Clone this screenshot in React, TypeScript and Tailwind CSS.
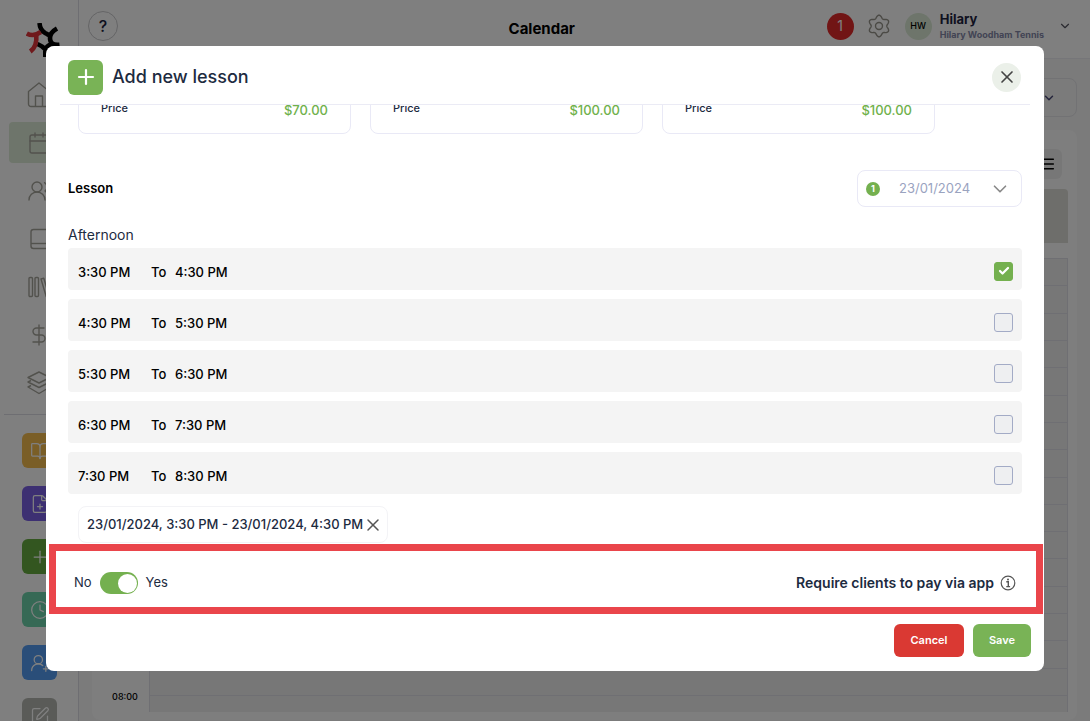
import React, { useState } from 'react';
import type { LucideIcon } from 'lucide-react';
import {
  BookOpen,
  Calendar,
  Check,
  ChevronDown,
  Clock,
  DollarSign,
  FilePlus,
  Menu,
  Plus,
  SquarePen,
  UserRoundPlus,
  UsersRound,
  X,
} from 'lucide-react';

interface Slot {
  from: string;
  to: string;
}

const slots: Slot[] = [
  { from: '3:30 PM', to: '4:30 PM' },
  { from: '4:30 PM', to: '5:30 PM' },
  { from: '5:30 PM', to: '6:30 PM' },
  { from: '6:30 PM', to: '7:30 PM' },
  { from: '7:30 PM', to: '8:30 PM' },
];

const prices = ['$70.00', '$100.00', '$100.00'];

const shortcuts: { label: string; icon: LucideIcon; color: string }[] = [
  { label: 'Courses', icon: BookOpen, color: 'bg-[#f5bc4f]' },
  { label: 'New invoice', icon: FilePlus, color: 'bg-[#7a61e4]' },
  { label: 'New lesson', icon: Plus, color: 'bg-[#66ac40]' },
  { label: 'Availability', icon: Clock, color: 'bg-[#6cd3ab]' },
  { label: 'Add client', icon: UserRoundPlus, color: 'bg-[#559df2]' },
  { label: 'Notes', icon: SquarePen, color: 'bg-[#b4b7b0]' },
];

const HomeIcon: React.FC = () => (
  <svg viewBox="0 0 24 26" className="h-[26px] w-6" fill="none" stroke="currentColor" strokeWidth="1.4">
    <path d="M1.500 9.500 12 1l10.500 8.500V22a2.500 2.500 0 0 1-2.500 2.500H4A2.500 2.500 0 0 1 1.500 22zM8.500 24.500V14h7v10.500" strokeLinejoin="round" />
  </svg>
);

const BookIcon: React.FC = () => (
  <svg viewBox="0 0 24 24" className="h-6 w-6" fill="none" stroke="currentColor" strokeWidth="1.4">
    <rect x="4" y="2.500" width="18" height="19" rx="2.500" />
    <path d="M4 16.500h18" />
  </svg>
);

const LibraryIcon: React.FC = () => (
  <svg viewBox="0 0 24 24" className="h-6 w-6" fill="none" stroke="currentColor" strokeWidth="1.4">
    <rect x="2" y="2.500" width="3.500" height="19" rx="1" />
    <rect x="8" y="2.500" width="3.500" height="19" rx="1" />
    <path d="M14 4l2.800-.8 5.200 17.500-2.800.8z" strokeLinejoin="round" />
  </svg>
);

const LayersIcon: React.FC = () => (
  <svg viewBox="0 0 24 24" className="h-6 w-6" fill="none" stroke="currentColor" strokeWidth="1.4" strokeLinejoin="round">
    <path d="M12 1l11 5.500L12 12 1 6.500zM4 9.500 1 11l11 5.500L23 11l-3-1.500M4 14.500 1 16l11 6.500L23 16l-3-1.500" />
  </svg>
);

// six-lobed outline, sampled every three degrees
const gearPath = Array.from({ length: 120 }, (_, i) => {
  const a = (i * Math.PI) / 60;
  const r = 9.3 + 1.5 * Math.cos(6 * a);
  return `${i ? 'L' : 'M'}${(12 + r * Math.sin(a)).toFixed(2)} ${(12 - r * Math.cos(a)).toFixed(2)}`;
}).join('');

const GearIcon: React.FC = () => (
  <svg viewBox="0 0 24 24" className="h-6 w-6" fill="none" stroke="currentColor" strokeWidth="1.4">
    <path d={`${gearPath}Z`} />
    <circle cx="12" cy="12" r="3.500" />
  </svg>
);

const InfoIcon: React.FC = () => (
  <svg viewBox="0 0 16 16" className="h-4 w-4" fill="none" stroke="#555" strokeWidth="1.200">
    <circle cx="8" cy="8" r="6.800" />
    <path d="M6.300 6.800H8.300V11.500M6.300 11.600h3.800" strokeWidth="1.400" />
    <circle cx="8" cy="4.500" r="1" fill="#555" stroke="none" />
  </svg>
);

const Logo: React.FC = () => (
  <svg viewBox="0 0 34 34" className="h-[34px] w-[34px]" fill="none" strokeWidth="4.6">
    <path d="M13.500 0c.3 5 2.500 8.300 6 10.300 2 1 4 1.700 5.500 3" stroke="#000" />
    <path d="M31 5.500c-4.500 2.500-7 5.500-7 9.500s2 7.500 9.500 6.700" stroke="#000" />
    <path d="M27 20.500c-4.500 1.300-7.700 4-7.700 8V34M19.500 26.500c-2-2.500-4.500-4-8-5.500" stroke="#000" />
    <path d="M.8 10.500c4.500 2.500 9 2 14-1.500" stroke="#e0343a" />
    <path d="M4.300 28.500c5-3.500 6.700-8.500 6-17" stroke="#e0343a" />
  </svg>
);

const navItems: { label: string; icon: React.ElementType }[] = [
  { label: 'Home', icon: HomeIcon },
  { label: 'Calendar', icon: Calendar },
  { label: 'Clients', icon: UsersRound },
  { label: 'Bookings', icon: BookIcon },
  { label: 'Library', icon: LibraryIcon },
  { label: 'Payments', icon: DollarSign },
  { label: 'Packages', icon: LayersIcon },
];

const Sidebar: React.FC = () => (
  <aside className="flex w-[79px] shrink-0 flex-col border-r border-[#dcdce4] bg-white">
    <div className="h-[74px] shrink-0 pt-[23px] pl-[26px]">
      <Logo />
    </div>
    <nav className="flex flex-col gap-[7px] px-[9px] pb-[11px]">
      {navItems.map(({ label, icon: Icon }) => (
        <a
          key={label}
          href="#"
          aria-label={label}
          className={`flex h-[41px] items-center justify-center rounded text-[#a5a49b] ${
            label === 'Calendar' ? 'bg-[#dcebd6]' : ''
          }`}
        >
          <Icon className="h-6 w-6" strokeWidth={1.4} />
        </a>
      ))}
    </nav>
    <div className="mx-1 border-t border-[#dcdce4]" />
    <div className="flex flex-col gap-[18px] pt-[18px] pl-[22px]">
      {shortcuts.map(({ label, icon: Icon, color }) => (
        <button
          key={label}
          aria-label={label}
          className={`flex h-[35px] w-[35px] shrink-0 items-center justify-center rounded-md text-white ${color}`}
        >
          <Icon className="h-5 w-5" strokeWidth={1.5} />
        </button>
      ))}
    </div>
  </aside>
);

const TopBar: React.FC = () => (
  <header className="grid h-[59px] shrink-0 grid-cols-[11fr_auto_13fr] items-center border-b border-[#ececf2] bg-white pr-[18px] pb-1.5 pl-[9px]">
    <button className="h-[30px] w-[30px] rounded-full border border-[#c9c9cc] text-base font-medium text-[#1d2340]">
      ?
    </button>
    <h1 className="pt-1.5 text-[15px] font-bold text-black">Calendar</h1>
    <div className="flex items-center justify-end">
      <span className="flex h-[27px] w-[27px] items-center justify-center rounded-full bg-[#e32b2b] text-sm text-white">
        1
      </span>
      <span className="ml-[13px] text-[#96948b]">
        <GearIcon />
      </span>
      <span className="ml-3.5 flex h-[27px] w-[27px] items-center justify-center rounded-full bg-[#dcebd6] text-[9px] font-medium">
        HW
      </span>
      <div className="mr-3.5 ml-2 pt-0.5 whitespace-nowrap">
        <p className="text-[13px] leading-4 font-bold text-[#1d2340]">Hilary</p>
        <p className="text-[9px] leading-4 font-bold text-[#8488a8]">Hilary Woodham Tennis</p>
      </div>
      <ChevronDown className="h-3.5 w-3.5 text-[#555560]" strokeWidth={2} />
    </div>
  </header>
);

const CalendarPage: React.FC = () => (
  <div className="flex min-w-0 flex-1 flex-col">
    <TopBar />
    <main className="flex min-h-0 flex-1 flex-col bg-[#f6f6f6] px-[13px] pt-[19px]">
      <button
        aria-label="Choose coach"
        className="flex h-[39px] w-44 items-center justify-end self-end rounded-lg border border-[#e4e4e8] pr-5 text-[#4a4a78]"
      >
        <ChevronDown className="h-3.5 w-3.5" strokeWidth={2.5} />
      </button>
      <section className="mt-[13px] flex flex-col rounded-lg bg-[#fcfcfc] px-[9px] pt-[19px] pb-2">
        <button
          aria-label="View options"
          className="mr-1.5 flex h-[30px] w-10 items-center justify-end self-end rounded-md bg-[#efefef] pr-1.5"
        >
          <Menu className="h-4 w-4" strokeWidth={2.2} />
        </button>
        <div className="mt-2.5 h-[54px] rounded-t bg-[#dddcd7]" />
        <div className="mt-[15px] grid h-[454px] grid-cols-[48px_1fr] overflow-hidden">
          <div className="flex flex-col items-center justify-end pb-2 text-[9px] leading-3.5 font-medium text-black">
            08:00
          </div>
          <div className="flex min-h-0 flex-col border-x border-t border-[#dfdfe6] bg-[#efefef]">
            {Array.from({ length: 16 }, (_, i) => (
              <div key={i} className="flex-1 border-b border-[#dfdfe6]" />
            ))}
            <div className="h-4" />
          </div>
        </div>
      </section>
    </main>
  </div>
);

const PriceCard: React.FC<{ price: string }> = ({ price }) => (
  <div className="flex h-[60px] w-[273px] items-center justify-between rounded-lg border border-[#e9e9f6] px-[22px] pt-2">
    <span className="text-[11px] font-medium text-[#1d2b3f]">Price</span>
    <span className="pt-1.5 text-[13px] font-medium text-[#6fb14b]">{price}</span>
  </div>
);

interface SlotRowProps extends Slot {
  checked: boolean;
  onToggle: () => void;
}

const SlotRow: React.FC<SlotRowProps> = ({ from, to, checked, onToggle }) => (
  <label className="flex h-[42px] items-center rounded bg-[#f4f4f4] pr-[9px] pl-2.5 text-[13px] font-medium text-black">
    <span className="w-[73px] pt-2">{from}</span>
    <span className="w-6 pt-2">To</span>
    <span className="flex-1 pt-2">{to}</span>
    <span className="grid place-items-center pt-1">
      <input
        type="checkbox"
        checked={checked}
        onChange={onToggle}
        className="col-start-1 row-start-1 h-[19px] w-[19px] appearance-none rounded-[3px] border border-[#a3abc6] bg-[#eeeff1] checked:border-[#74b04f] checked:bg-[#74b04f]"
      />
      {checked && (
        <Check className="pointer-events-none col-start-1 row-start-1 h-3 w-3 text-white" strokeWidth={4.5} />
      )}
    </span>
  </label>
);

const LessonDialog: React.FC = () => {
  const [selected, setSelected] = useState<string[]>(['3:30 PM']);
  const [payViaApp, setPayViaApp] = useState(true);

  const toggle = (from: string) =>
    setSelected((prev) => (prev.includes(from) ? prev.filter((s) => s !== from) : [...prev, from]));

  return (
    <div
      role="dialog"
      aria-labelledby="dialog-title"
      className="w-full rounded-lg bg-white pb-3.5 text-[#1d2b3f]"
    >
      <div className="mx-3.5 flex h-[59px] items-center border-b border-[#ebebf5] pt-1 pr-[9px] pl-2">
        <span className="flex h-[35px] w-[35px] items-center justify-center rounded-md bg-[#79b356] text-white">
          <Plus className="h-6 w-6" strokeWidth={2.2} />
        </span>
        <h2 id="dialog-title" className="ml-[9px] flex-1 text-lg font-medium">
          Add new lesson
        </h2>
        <button
          aria-label="Close"
          className="flex h-[29px] w-[29px] items-center justify-center rounded-full bg-[#ebf0e9] text-[#444]"
        >
          <X className="h-5 w-5" strokeWidth={2} />
        </button>
      </div>

      <div className="px-[22px]">
        <div className="flex h-[29px] items-end gap-[19px] overflow-hidden pl-2.5">
          {prices.map((price, i) => (
            <PriceCard key={i} price={price} />
          ))}
        </div>

        <div className="mt-9 flex items-center justify-between">
          <h3 className="text-[13px] font-semibold text-black">Lesson</h3>
          <label className="flex h-[37px] w-[165px] items-center rounded-lg border border-[#e9e9f6] px-2">
            <span className="flex h-3.5 w-3.5 items-center justify-center rounded-full bg-[#74b04f] text-[9px] font-bold text-white">
              1
            </span>
            <select
              aria-label="Lesson date"
              className="ml-[19px] min-w-0 flex-1 appearance-none bg-transparent text-[13px] text-[#9aa3bf]"
            >
              <option>23/01/2024</option>
            </select>
            <ChevronDown className="pointer-events-none mr-0.5 h-[22px] w-[22px] text-[#888]" strokeWidth={1.8} />
          </label>
        </div>

        <p className="mt-[18px] text-sm leading-5">Afternoon</p>
        <div className="mt-[3px] flex flex-col gap-[9px]">
          {slots.map((slot) => (
            <SlotRow
              key={slot.from}
              {...slot}
              checked={selected.includes(slot.from)}
              onToggle={() => toggle(slot.from)}
            />
          ))}
        </div>

        <div className="mt-3 ml-2.5 flex h-[37px] w-fit items-center rounded-lg border border-[#f3f3f6] pr-1 pl-2 text-[13px] font-medium">
          23/01/2024, 3:30 PM - 23/01/2024, 4:30 PM
          <button aria-label="Remove date" className="text-[#555]">
            <X className="h-5 w-5" strokeWidth={1.8} />
          </button>
        </div>
      </div>

      <div className="mt-px mr-px ml-[3px] flex h-[70px] items-center justify-between border-[7px] border-[#ea454b] pt-2 pr-5 pl-[18px] text-[13px]">
        <label className="flex items-center gap-2">
          No
          <input
            type="checkbox"
            role="switch"
            checked={payViaApp}
            onChange={() => setPayViaApp(!payViaApp)}
            className="flex h-[22px] w-[38px] appearance-none items-center rounded-full bg-gray-300 px-px before:h-[19px] before:w-[19px] before:rounded-full before:bg-white checked:justify-end checked:bg-[#74b04f]"
          />
          Yes
        </label>
        <p className="flex items-center gap-1.5 text-sm font-semibold">
          Require clients to pay via app
          <InfoIcon />
        </p>
      </div>

      <div className="mt-2.5 flex justify-end gap-[9px] pr-[13px] text-[11px] font-semibold text-white">
        <button className="h-[33px] w-[70px] rounded-md bg-[#da3933]">Cancel</button>
        <button className="h-[33px] w-[58px] rounded-md bg-[#79b356]">Save</button>
      </div>
    </div>
  );
};

export default function App() {
  return (
    <div className="relative flex h-screen overflow-hidden bg-white font-['Inter',sans-serif]">
      <Sidebar />
      <CalendarPage />
      <div className="fixed inset-0 flex items-start bg-black/50 px-[46px] pt-[46px]">
        <LessonDialog />
      </div>
    </div>
  );
}
